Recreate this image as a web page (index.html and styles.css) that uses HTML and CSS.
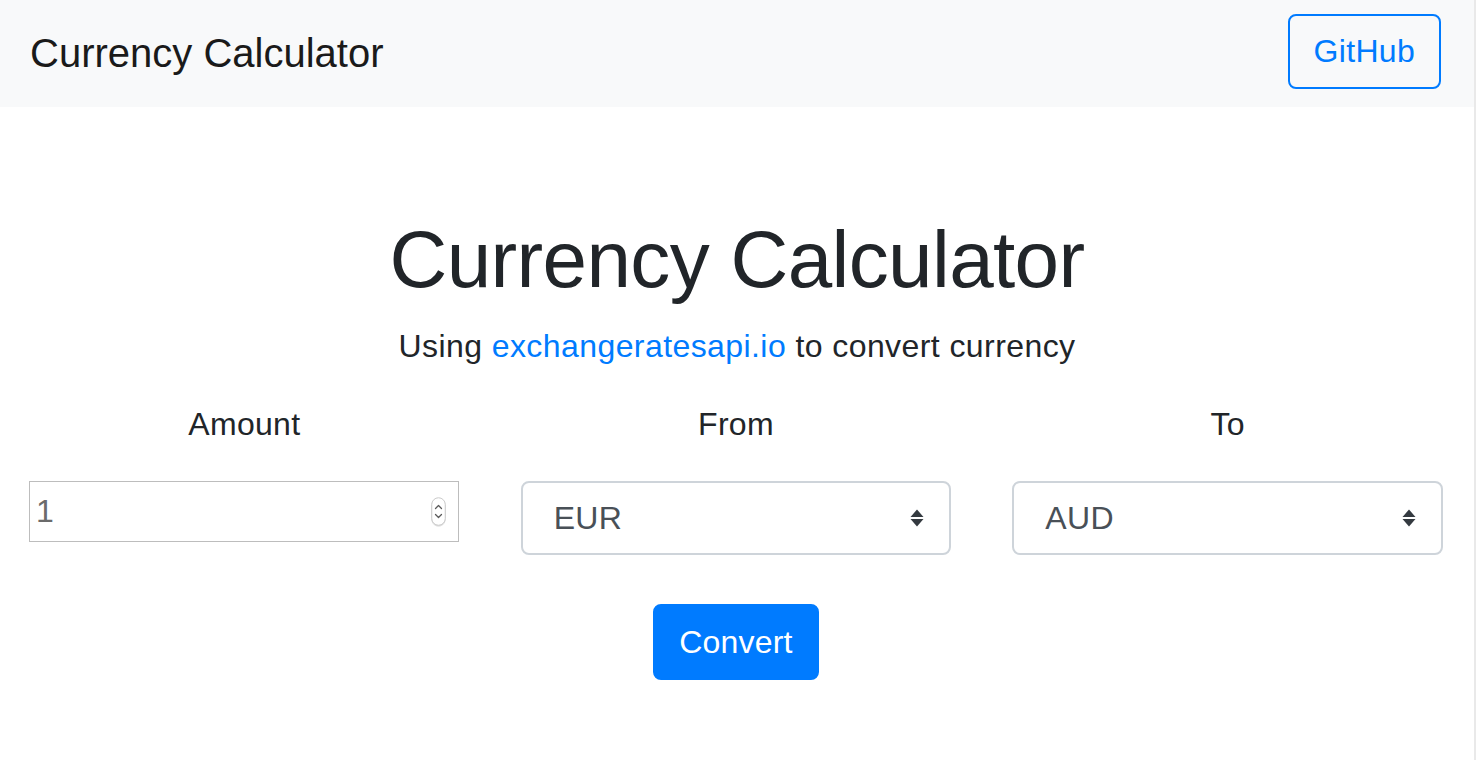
FILE: index.html
```html
<!DOCTYPE html>
<html lang="en">
<head>
<meta charset="utf-8">
<title>Currency Calculator</title>
<link rel="stylesheet" href="styles.css">
</head>
<body>
<div class="page">
  <nav class="navbar">
    <a class="brand" href="#">Currency Calculator</a>
    <a class="btn btn-outline" href="#">GitHub</a>
  </nav>
  <main class="main">
    <h1 class="title">Currency Calculator</h1>
    <p class="subtitle">Using <a class="link" href="#">exchangeratesapi.io</a> to convert currency</p>
    <div class="row">
      <div class="col">
        <label class="label" for="amount">Amount</label>
        <div class="number-wrap">
          <input class="number-input" id="amount" type="number" value="1">
          <svg class="spinner" width="15" height="29" viewBox="0 0 15 29" aria-hidden="true">
            <rect x="0.75" y="0.75" width="13.5" height="27.5" rx="6.75" fill="#fff" stroke="#c9c9c9" stroke-width="1"/>
            <path d="M4.5 11.5 L7.5 8.5 L10.5 11.5" fill="none" stroke="#5a5a5a" stroke-width="1.3" stroke-linecap="round" stroke-linejoin="round"/>
            <path d="M4.5 17.5 L7.5 20.5 L10.5 17.5" fill="none" stroke="#5a5a5a" stroke-width="1.3" stroke-linecap="round" stroke-linejoin="round"/>
          </svg>
        </div>
      </div>
      <div class="col">
        <label class="label" for="from">From</label>
        <div class="select-wrap">
          <select class="select" id="from"><option>EUR</option></select>
          <svg class="select-arrow" width="14" height="20" viewBox="0 0 14 20" aria-hidden="true">
            <polygon points="0.5,9 7,1.5 13.5,9" fill="#343a40"/>
            <polygon points="0.5,11 7,18.5 13.5,11" fill="#343a40"/>
          </svg>
        </div>
      </div>
      <div class="col">
        <label class="label" for="to">To</label>
        <div class="select-wrap">
          <select class="select" id="to"><option>AUD</option></select>
          <svg class="select-arrow" width="14" height="20" viewBox="0 0 14 20" aria-hidden="true">
            <polygon points="0.5,9 7,1.5 13.5,9" fill="#343a40"/>
            <polygon points="0.5,11 7,18.5 13.5,11" fill="#343a40"/>
          </svg>
        </div>
      </div>
    </div>
    <div class="actions">
      <button class="btn btn-primary" type="button">Convert</button>
    </div>
  </main>
</div>
</body>
</html>
```
FILE: styles.css
```css
* { box-sizing: border-box; }

html, body {
  margin: 0;
  padding: 0;
  background: #fff;
}

body {
  font-family: "Liberation Sans", Arial, sans-serif;
  color: #212529;
  font-size: 32px;
  line-height: 48px;
  letter-spacing: 0.3px;
  height: 760px;
  overflow: hidden;
}

.page {
  width: 100%;
  min-height: 760px;
  border-right: 2px solid #e9e9e9;
}

.navbar {
  height: 107px;
  background: #f8f9fa;
  display: flex;
  align-items: center;
  justify-content: space-between;
  padding: 0 33px 0 30px;
}

.brand {
  font-size: 40px;
  line-height: 60px;
  letter-spacing: 0;
  color: #1a1a1a;
  text-decoration: none;
  margin-top: -2px;
}

.btn {
  display: inline-block;
  font-family: inherit;
  font-size: 32px;
  line-height: 47px;
  letter-spacing: 0.3px;
  border: 2px solid #007bff;
  border-radius: 8px;
  text-decoration: none;
  text-align: center;
  cursor: pointer;
}

.btn-outline {
  color: #007bff;
  background: transparent;
  padding: 12px 24px;
  margin-top: -4px;
}

.main {
  padding-top: 105px;
}

.title {
  margin: 0;
  text-align: center;
  font-size: 80px;
  line-height: 96px;
  font-weight: 400;
  letter-spacing: -0.63px;
  color: #212529;
}

.subtitle {
  margin: 14px 0 0;
  text-align: center;
  letter-spacing: 0.42px;
}

.link {
  color: #007bff;
  text-decoration: none;
}

.row {
  margin-top: 30px;
  display: grid;
  grid-template-columns: repeat(3, 1fr);
  column-gap: 61px;
  padding: 0 31px 0 29px;
  align-items: start;
}

.col {
  display: flex;
  flex-direction: column;
  align-items: stretch;
}

.label {
  display: block;
  text-align: center;
  margin-bottom: 33px;
}

.number-wrap {
  position: relative;
  margin-right: 1px;
}

.number-input {
  display: block;
  width: 100%;
  height: 61px;
  margin: 0;
  padding: 0 6px;
  border: 1px solid #bdbdbd;
  border-radius: 0;
  font-family: inherit;
  font-size: 32px;
  letter-spacing: 0;
  color: #6b6b6b;
  background: #fff;
  outline: none;
  -moz-appearance: textfield;
}

.number-input::-webkit-inner-spin-button,
.number-input::-webkit-outer-spin-button {
  -webkit-appearance: none;
  margin: 0;
}

.spinner {
  position: absolute;
  right: 13px;
  top: 16px;
  filter: drop-shadow(0 1px 0.5px rgba(0,0,0,0.12));
}

.select-wrap {
  position: relative;
}

.select {
  display: block;
  width: 100%;
  height: 74px;
  margin: 0;
  padding: 0 56px 0 31px;
  border: 2px solid #ced4da;
  border-radius: 8px;
  background: #fff;
  font-family: inherit;
  font-size: 32px;
  letter-spacing: 0.3px;
  color: #495057;
  -webkit-appearance: none;
  -moz-appearance: none;
  appearance: none;
  outline: none;
}

.select-arrow {
  position: absolute;
  right: 27px;
  top: 27px;
}

.actions {
  display: flex;
  justify-content: center;
  margin-top: 49px;
}

.btn-primary {
  color: #fff;
  background: #007bff;
  padding: 12px 24px 12px 24px;
  line-height: 48px;
  letter-spacing: 0.2px;
  margin-right: 2px;
}
```
